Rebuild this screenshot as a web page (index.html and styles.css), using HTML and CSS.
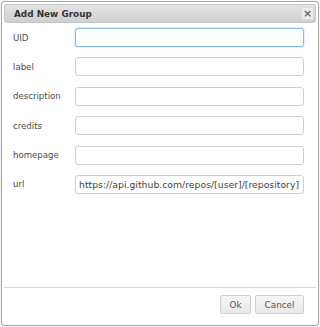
FILE: index.html
```html
<!DOCTYPE html>
<html lang="en">
<head>
    <meta charset="UTF-8">
    <meta name="viewport" content="width=device-width, initial-scale=1.0">
    <title>Add New Group</title>
    <link rel="stylesheet" href="styles.css">
</head>
<body>

    <div class="dialog">
        <!-- Title bar -->
        <div class="titlebar">
            <span class="title">Add New Group</span>
            <button class="close" title="close">&#215;</button>
        </div>

        <!-- Form -->
        <div class="content">
            <form class="group-form">
                <label for="uid">UID</label>
                <input id="uid" type="text" class="focused">

                <label for="label">label</label>
                <input id="label" type="text">

                <label for="description">description</label>
                <input id="description" type="text">

                <label for="credits">credits</label>
                <input id="credits" type="text">

                <label for="homepage">homepage</label>
                <input id="homepage" type="text">

                <label for="url">url</label>
                <input id="url" type="text" value="https://api.github.com/repos/[user]/[repository]">
            </form>
        </div>

        <!-- Buttons -->
        <div class="buttonpane">
            <button class="btn btn-ok">Ok</button>
            <button class="btn btn-cancel">Cancel</button>
        </div>
    </div>

</body>
</html>
```

FILE: styles.css
```css
* {
    margin: 0;
    padding: 0;
    box-sizing: border-box;
}

body {
    background: #fff;
    font-family: "DejaVu Sans", Verdana, sans-serif;
    color: #444;
    padding: 1px;
}

.dialog {
    width: 318px;
    height: 325px;
    border: 1px solid #a8a8a8;
    border-radius: 3px;
    background: #fff;
    padding: 2px;
    display: flex;
    flex-direction: column;
    box-shadow: 0 0 2px rgba(0, 0, 0, 0.15);
}

.titlebar {
    height: 19px;
    border: 1px solid #c4c4c4;
    border-radius: 3px;
    background: linear-gradient(#e4e4e4, #cfcfcf);
    display: flex;
    align-items: center;
    justify-content: space-between;
    padding: 0 1px 0 9px;
}

.title {
    font-size: 8.9px;
    font-weight: bold;
    color: #333;
}

.close {
    width: 13px;
    height: 13px;
    border: 1px solid #dcdcdc;
    border-radius: 2px;
    background: #ebebeb;
    color: #666;
    font-family: "DejaVu Sans", sans-serif;
    font-size: 11px;
    font-weight: bold;
    line-height: 11px;
    text-align: center;
}

.content {
    flex: 1;
    padding: 5px 10px 0 9px;
}

.group-form {
    display: grid;
    grid-template-columns: 62px 229px;
    grid-auto-rows: 19px;
    row-gap: 10.4px;
    align-items: center;
}

.group-form label {
    font-size: 8.6px;
    color: #4a4a4a;
}

.group-form input {
    height: 19px;
    width: 229px;
    border: 1px solid #cfcfcf;
    border-radius: 3px;
    padding: 0 3px;
    font-family: "DejaVu Sans", Verdana, sans-serif;
    font-size: 9.3px;
    color: #444;
    background: #fff;
    outline: none;
}

.group-form input.focused {
    border-color: #88b8e4;
    box-shadow: 0 0 2px rgba(100, 160, 230, 0.6);
}

.buttonpane {
    height: 36px;
    border-top: 1px solid #d4d4d4;
    display: flex;
    justify-content: flex-end;
    align-items: flex-start;
    gap: 4px;
    padding: 7px 12px 0 0;
}

.btn {
    height: 19px;
    border: 1px solid #d0d0d0;
    border-radius: 2px;
    background: linear-gradient(#f6f6f6, #e8e8e8);
    color: #555;
    font-family: "DejaVu Sans", Verdana, sans-serif;
    font-size: 8.8px;
    padding: 0;
}

.btn-ok {
    width: 31px;
}

.btn-cancel {
    width: 49px;
}
```
